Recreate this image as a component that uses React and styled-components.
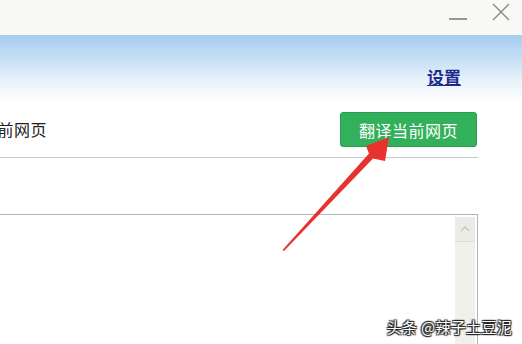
import React from 'react';
import styled, { createGlobalStyle } from 'styled-components';

const Global = createGlobalStyle`
  html, body { margin: 0; padding: 0; background: #fff; }
  body { font-family: "Noto Sans CJK SC", "Noto Sans", sans-serif; }
`;

const Screen = styled.div`position: relative; width: 522px; height: 344px; overflow: hidden; background: #fff;`;
const TitleBar = styled.div`height: 35px; background: #f8f8f6; display: flex; justify-content: flex-end; align-items: center; gap: 24px; padding-right: 11px; box-sizing: border-box;`;
const WinBtn = styled.svg`display: block; margin-top: ${p => p.$lift || 0}px;`;
const Header = styled.div`
  height: 65px; display: flex; align-items: flex-end; justify-content: flex-end; padding: 0 61px 12px 0; box-sizing: border-box;
  background: linear-gradient(180deg, #a6cdf0 0%, #c4def5 35%, #e8f2fb 70%, #fdfeff 100%);
`;
const Link = styled.a`color: #1c2a8a; font-size: 17px; font-weight: bold; text-decoration: underline; line-height: 22px; cursor: pointer;`;
const Body = styled.div`margin-left: -52px; width: 530px;`;
const Row = styled.div`height: 58px; display: flex; align-items: center; justify-content: space-between; border-bottom: 1px solid #c9cacb; box-sizing: border-box;`;
const Label = styled.span`font-size: 16px; color: #222; letter-spacing: 0.5px;`;
const Button = styled.button`
  width: 137px; height: 35px; background: #33b05b; color: #fff; border: 1px solid #2a9e4f; border-radius: 3px;
  font-family: inherit; font-size: 16px; letter-spacing: 0.5px; cursor: pointer; margin-right: 1px; margin-top: 2px;
`;
const TextBox = styled.div`margin-top: 56px; height: 200px; border: 1px solid #a9b7bf; border-left: none; display: flex; justify-content: flex-end; padding: 2px 2px 0 0;`;
const ScrollBar = styled.div`width: 20px; background: #f1f1ec; display: flex; flex-direction: column;`;
const ScrollBtn = styled.div`height: 24px; background: #ecece6; border-bottom: 1px solid #dcdcd4; display: flex; align-items: center; justify-content: center;`;
const Overlay = styled.svg`position: absolute; left: 0; top: 0; pointer-events: none;`;
const Watermark = styled.div`
  position: absolute; right: 10px; bottom: 7px; color: #fff; font-size: 15px; letter-spacing: 0.3px;
  text-shadow: 0 0 1px #222, 1px 1px 1px #222, -1px -1px 1px #222, 1px -1px 1px #222, -1px 1px 1px #222;
`;

export default function App() {
  return (
    <Screen>
      <Global />
      <TitleBar>
        <WinBtn width="18" height="10" viewBox="0 0 18 10" $lift={-4}><line x1="0" y1="8" x2="18" y2="8" stroke="#777" strokeWidth="1.5" /></WinBtn>
        <WinBtn width="20" height="20" viewBox="0 0 20 20" $lift={-12}>
          <path d="M2 2 L18 18 M18 2 L2 18" stroke="#888" strokeWidth="1.4" />
        </WinBtn>
      </TitleBar>
      <Header>
        <Link>设置</Link>
      </Header>
      <Body>
        <Row>
          <Label>翻译当前网页</Label>
          <Button>翻译当前网页</Button>
        </Row>
        <TextBox>
          <ScrollBar>
            <ScrollBtn>
              <svg width="10" height="6" viewBox="0 0 10 6"><path d="M1 5 L5 1 L9 5" stroke="#c8c8c0" strokeWidth="1.5" fill="none" /></svg>
            </ScrollBtn>
          </ScrollBar>
        </TextBox>
      </Body>
      <Overlay width="522" height="344" viewBox="0 0 522 344">
        <path d="M282.5 250 L284 251 L373 158.5 L385 161 L389 137 L366 146 L369 153.5 Z" fill="#e8322e" />
      </Overlay>
      <Watermark>头条 @辣子土豆泥</Watermark>
    </Screen>
  );
}
